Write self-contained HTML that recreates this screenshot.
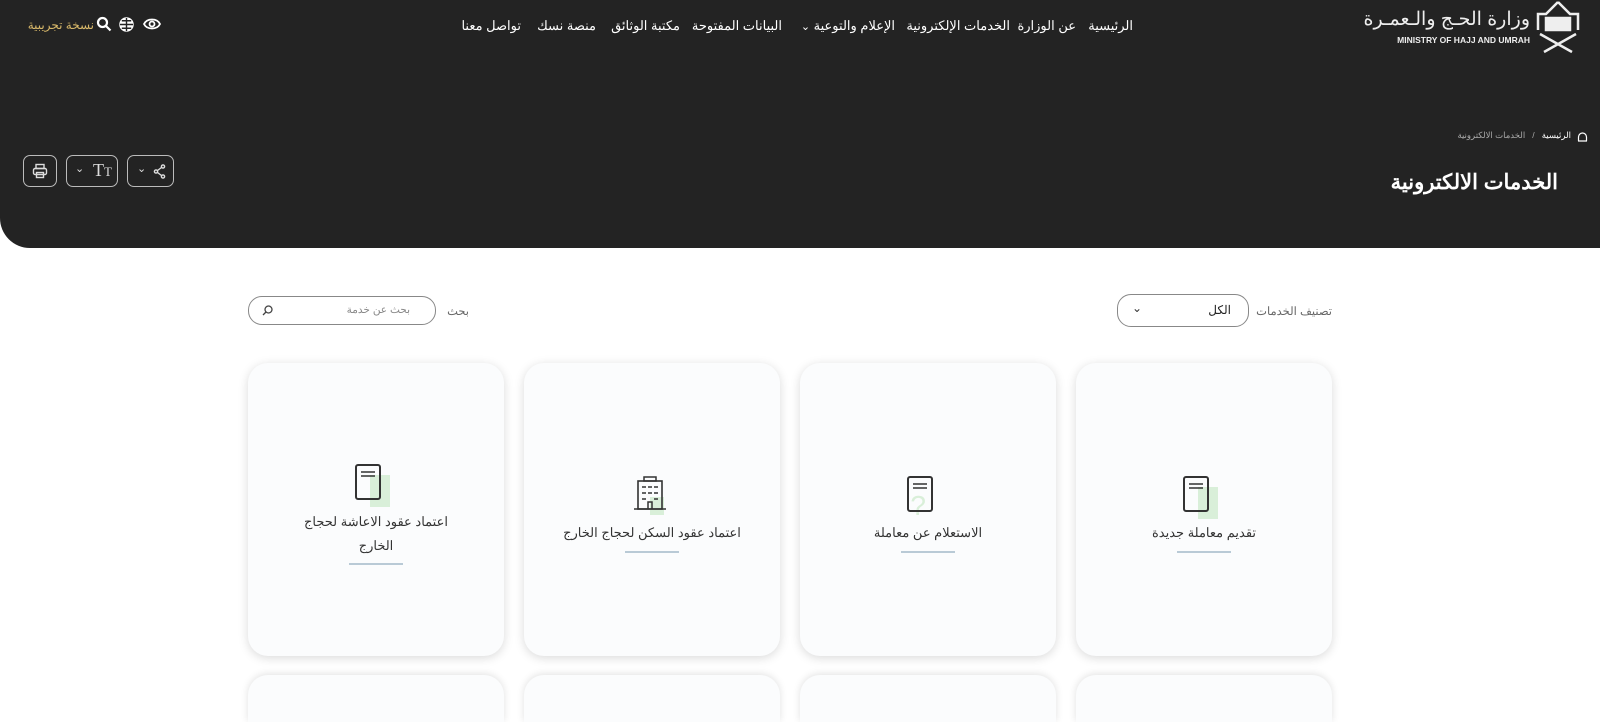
<!DOCTYPE html>
<html lang="ar" dir="rtl"><head><meta charset="utf-8">
<style>
*{box-sizing:border-box;margin:0;padding:0}
html{width:1600px;height:722px;overflow:hidden}
body{width:1600px;height:722px;overflow:hidden;background:#fff;font-family:"Liberation Sans","Noto Sans CJK SC",sans-serif;position:relative}
.hdr{position:absolute;left:0;top:0;width:1600px;height:248px;background:#232323;border-bottom-left-radius:30px}
.abs{position:absolute;white-space:nowrap}
.nav{position:absolute;top:18px;color:#fff;font-size:13px;white-space:nowrap}
.btn{position:absolute;top:155px;height:32px;border:1px solid #bbb;border-radius:7px;color:#ddd}
.card{position:absolute;width:256px;height:293px;background:#fbfcfd;border-radius:20px;box-shadow:0 2px 10px rgba(0,0,0,.15);text-align:center;color:#333;font-size:13px}
.card.r2{height:47px;border-radius:20px 20px 0 0;box-shadow:0 -1px 8px rgba(0,0,0,.12)}
.card .t{position:absolute;left:0;right:0;line-height:24px}
.card .ln{position:absolute;width:54px;height:2px;background:#b9cad6;left:101px}
</style></head><body>
<div class="hdr">
 <div class="abs" style="right:70px;top:8px;color:#eee;font-size:19px">وزارة الحـج والـعمـرة</div>
 <div class="abs" style="right:70px;top:35px;color:#eee;font-size:8.5px;font-weight:bold;direction:ltr">MINISTRY OF HAJJ AND UMRAH</div>
 <svg class="abs" style="left:1536px;top:0" width="44" height="54" viewBox="0 0 44 54" fill="none" stroke="#eee" stroke-width="2.5"><path d="M22 2 L34 14 L42 14 L42 30"/><path d="M22 2 L10 14 L2 14 L2 30"/><rect x="10" y="18" width="24" height="12" fill="#eee"/><path d="M4 34 L36 52 M40 34 L8 52"/></svg>
 <div class="nav" style="right:467px">الرئيسية</div>
 <div class="nav" style="right:524px">عن الوزارة</div>
 <div class="nav" style="right:590px">الخدمات الإلكترونية</div>
 <div class="nav" style="right:705px">الإعلام والتوعية <span style="font-size:11px">⌄</span></div>
 <div class="nav" style="right:818px">البيانات المفتوحة</div>
 <div class="nav" style="right:920px">مكتبة الوثائق</div>
 <div class="nav" style="right:1004px">منصة نسك</div>
 <div class="nav" style="right:1079px">تواصل معنا</div>
 <div class="abs" style="right:1506px;top:18px;color:#d9b96a;font-size:12px">نسخة تجريبية</div>
 <svg class="abs" style="left:96px;top:16px" width="16" height="16" viewBox="0 0 16 16" fill="none" stroke="#fff" stroke-width="2.2"><circle cx="6.5" cy="6.5" r="4.5"/><path d="M10 10l4.5 4.5"/></svg>
 <svg class="abs" style="left:119px;top:17px" width="15" height="15" viewBox="0 0 16 16" fill="none" stroke="#fff" stroke-width="1.5"><circle cx="8" cy="8" r="7" fill="#fff"/><path d="M1 8h14M8 1v14M3 4h10M3 12h10" stroke="#232323"/></svg>
 <svg class="abs" style="left:143px;top:16px" width="18" height="16" viewBox="0 0 18 16" fill="none" stroke="#fff" stroke-width="1.8"><path d="M1 8C4 2 14 2 17 8C14 14 4 14 1 8Z"/><circle cx="9" cy="8" r="2.5"/></svg>
 <svg class="abs" style="left:1577px;top:131px" width="11" height="11" viewBox="0 0 11 11" fill="none" stroke="#fff" stroke-width="1.2"><path d="M1 10h9M1.5 10V6a4 4 0 0 1 8 0v4"/></svg>
 <div class="abs" style="right:29px;top:130px;color:#aaa;font-size:8.5px"><span style="color:#fff">الرئيسية</span> &nbsp; / &nbsp; الخدمات الالكترونية</div>
 <div class="abs" style="right:42px;top:170px;color:#fff;font-size:21px;font-weight:bold">الخدمات الالكترونية</div>
 <div class="btn" style="left:23px;width:34px"><svg style="position:absolute;left:8px;top:7px" width="16" height="16" viewBox="0 0 16 16" fill="none" stroke="#ddd" stroke-width="1.4"><rect x="4" y="1.5" width="8" height="4"/><rect x="1.5" y="5.5" width="13" height="6" rx="1.5"/><rect x="4.5" y="9.5" width="7" height="5"/></svg></div>
 <div class="btn" style="left:66px;width:52px"><span style="position:absolute;left:8px;top:6px;font-size:11px">⌄</span><span style="position:absolute;left:26px;top:4px;font-size:18px;font-family:'Liberation Serif',serif">T<small style="font-size:13px">T</small></span></div>
 <div class="btn" style="left:127px;width:47px"><span style="position:absolute;left:9px;top:6px;font-size:11px">⌄</span><svg style="position:absolute;left:25px;top:8px" width="13" height="15" viewBox="0 0 13 15" fill="none" stroke="#ddd" stroke-width="1.4"><circle cx="10" cy="2.5" r="1.6"/><circle cx="3" cy="7.5" r="1.6"/><circle cx="10" cy="12.5" r="1.6"/><path d="M4.5 6.5L8.5 3.5M4.5 8.5L8.5 11.5"/></svg></div>
</div>

<div class="abs" style="right:268px;top:304px;color:#666;font-size:11.5px">تصنيف الخدمات</div>
<div class="abs" style="left:1117px;top:294px;width:132px;height:33px;border:1px solid #888;border-radius:14px"><span style="position:absolute;right:17px;top:8px;font-size:12px;color:#222">الكل</span><span style="position:absolute;left:14px;top:6px;font-size:12px;color:#333">⌄</span></div>
<div class="abs" style="right:1131px;top:304px;color:#666;font-size:11.5px">بحث</div>
<div class="abs" style="left:248px;top:296px;width:188px;height:29px;border:1px solid #888;border-radius:14px"><span style="position:absolute;right:25px;top:7px;font-size:10.5px;color:#888">بحث عن خدمة</span><svg style="position:absolute;left:13px;top:8px" width="11" height="11" viewBox="0 0 11 11" fill="none" stroke="#444" stroke-width="1.3"><circle cx="6.5" cy="4.5" r="3.5"/><path d="M4 7L1 10"/></svg></div>

<div class="card" style="left:1076px;top:363px">
 <svg style="position:absolute;left:106px;top:112px" width="46" height="46" viewBox="0 0 46 46"><rect x="16" y="12" width="20" height="32" fill="#d9efd9"/><rect x="2" y="2" width="24" height="34" rx="2" fill="none" stroke="#333" stroke-width="2"/><path d="M7 9h14M7 13h14" stroke="#333" stroke-width="1.5"/></svg>
 <div class="t" style="top:158px">تقديم معاملة جديدة</div><div class="ln" style="top:188px"></div></div>
<div class="card" style="left:800px;top:363px">
 <svg style="position:absolute;left:106px;top:112px" width="46" height="46" viewBox="0 0 46 46"><text x="20" y="40" font-size="28" fill="#d9efd9" font-family="Liberation Sans">?</text><rect x="2" y="2" width="24" height="34" rx="2" fill="none" stroke="#333" stroke-width="2"/><path d="M7 9h14M7 13h14" stroke="#333" stroke-width="1.5"/></svg>
 <div class="t" style="top:158px">الاستعلام عن معاملة</div><div class="ln" style="top:188px"></div></div>
<div class="card" style="left:524px;top:363px">
 <svg style="position:absolute;left:106px;top:112px" width="46" height="46" viewBox="0 0 46 46"><rect x="20" y="22" width="14" height="18" fill="#d9efd9"/><rect x="8" y="6" width="24" height="28" fill="none" stroke="#333" stroke-width="1.6"/><rect x="14" y="2" width="12" height="4" fill="none" stroke="#333" stroke-width="1.5"/><path d="M12 12h4M18 12h4M24 12h4M12 18h4M18 18h4M24 18h4M12 24h4M24 24h4M4 34h32M18 34v-7h4v7" stroke="#333" stroke-width="1.5" fill="none"/></svg>
 <div class="t" style="top:158px">اعتماد عقود السكن لحجاج الخارج</div><div class="ln" style="top:188px"></div></div>
<div class="card" style="left:248px;top:363px">
 <svg style="position:absolute;left:106px;top:100px" width="46" height="46" viewBox="0 0 46 46"><rect x="16" y="12" width="20" height="32" fill="#d9efd9"/><rect x="2" y="2" width="24" height="34" rx="2" fill="none" stroke="#333" stroke-width="2"/><path d="M7 9h14M7 13h14" stroke="#333" stroke-width="1.5"/></svg>
 <div class="t" style="top:147px;padding:0 50px">اعتماد عقود الاعاشة لحجاج الخارج</div><div class="ln" style="top:200px"></div></div>
<div class="card r2" style="left:248px;top:675px"></div>
<div class="card r2" style="left:524px;top:675px"></div>
<div class="card r2" style="left:800px;top:675px"></div>
<div class="card r2" style="left:1076px;top:675px"></div>
</body></html>
